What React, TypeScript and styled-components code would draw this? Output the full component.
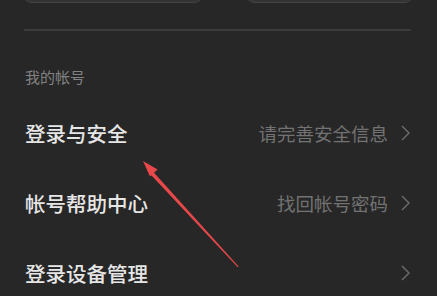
import styled, { createGlobalStyle } from "styled-components";

// Page-wide reset
const GlobalStyle = createGlobalStyle`
  html, body {
    margin: 0;
    padding: 0;
    background: #272727;
    overflow: hidden;
  }
  body {
    font-family: "Noto Sans CJK SC", "Noto Sans", sans-serif;
  }
`;

// Props for one settings row
interface SettingRowProps {
  title: string; // Row title
  hint?: string; // Grey hint on the right
}

const rows: SettingRowProps[] = [
  { title: "登录与安全", hint: "请完善安全信息" },
  { title: "帐号帮助中心", hint: "找回帐号密码" },
  { title: "登录设备管理" },
];

// Account settings screen
function App() {
  return (
    <>
      <GlobalStyle />
      <Screen>
        <ActionRow>
          <ActionButton $width={182} />
          <ActionButton $width={169} />
        </ActionRow>
        <Divider />
        <SectionLabel>我的帐号</SectionLabel>
        <RowList>
          {rows.map((row, i) => (
            <SettingRow key={i} title={row.title} hint={row.hint} />
          ))}
        </RowList>
        <PointerArrow />
      </Screen>
    </>
  );
}
export default App;

// One tappable settings row
function SettingRow(props: SettingRowProps) {
  return (
    <Row>
      <RowTitle>{props.title}</RowTitle>
      <RowEnd>
        {props.hint && <RowHint>{props.hint}</RowHint>}
        <Chevron viewBox="0 0 9 16">
          <path d="M1 1 L8 8 L1 15" />
        </Chevron>
      </RowEnd>
    </Row>
  );
}

// Red annotation arrow drawn over the list
function PointerArrow() {
  return (
    <ArrowLayer viewBox="0 0 437 296">
      <polygon points="150.6,174.5 153.4,172 238.6,266.6 237.8,267.2" />
      <polygon points="143,161 150,176.6 157.6,169.6" />
    </ArrowLayer>
  );
}

// Outer screen container
const Screen = styled.div`
  position: relative;
  width: 437px;
  height: 296px;
  background: #272727;
  overflow: hidden;
`;

// Bottom edges of the two buttons cut off at the top
const ActionRow = styled.div`
  display: flex;
  justify-content: space-between;
  padding: 0 23px 0 22px;
  margin-top: -41px;
`;

const ActionButton = styled.div<{ $width: number }>`
  width: ${(p) => p.$width}px;
  height: 44px;
  box-sizing: border-box;
  border-radius: 10px;
  background: #343434;
  border: 1px solid #444444;
`;

// Thin separator line
const Divider = styled.div`
  height: 2px;
  margin: 26px 26px 0 24px;
  background: #3b3b3b;
`;

// Small grey section heading
const SectionLabel = styled.div`
  margin: 36px 0 0 25px;
  font-size: 15px;
  line-height: 20px;
  color: #828282;
`;

// List of rows
const RowList = styled.div`
  display: flex;
  flex-direction: column;
  margin-top: 11px;
`;

const Row = styled.div`
  height: 70px;
  display: flex;
  align-items: center;
  justify-content: space-between;
  padding: 0 27px 0 25px;
`;

const RowTitle = styled.div`
  font-size: 20.5px;
  font-weight: 500;
  color: #e6e6e6;
`;

const RowEnd = styled.div`
  display: flex;
  align-items: center;
  gap: 13px;
`;

const RowHint = styled.div`
  font-size: 18.5px;
  color: #727272;
`;

const Chevron = styled.svg`
  width: 9px;
  height: 16px;
  fill: none;
  stroke: #6a6a6a;
  stroke-width: 1.5;
`;

// Overlay for the annotation arrow
const ArrowLayer = styled.svg`
  position: absolute;
  left: 0;
  top: 0;
  width: 437px;
  height: 296px;
  fill: #e8484a;
  pointer-events: none;
`;
